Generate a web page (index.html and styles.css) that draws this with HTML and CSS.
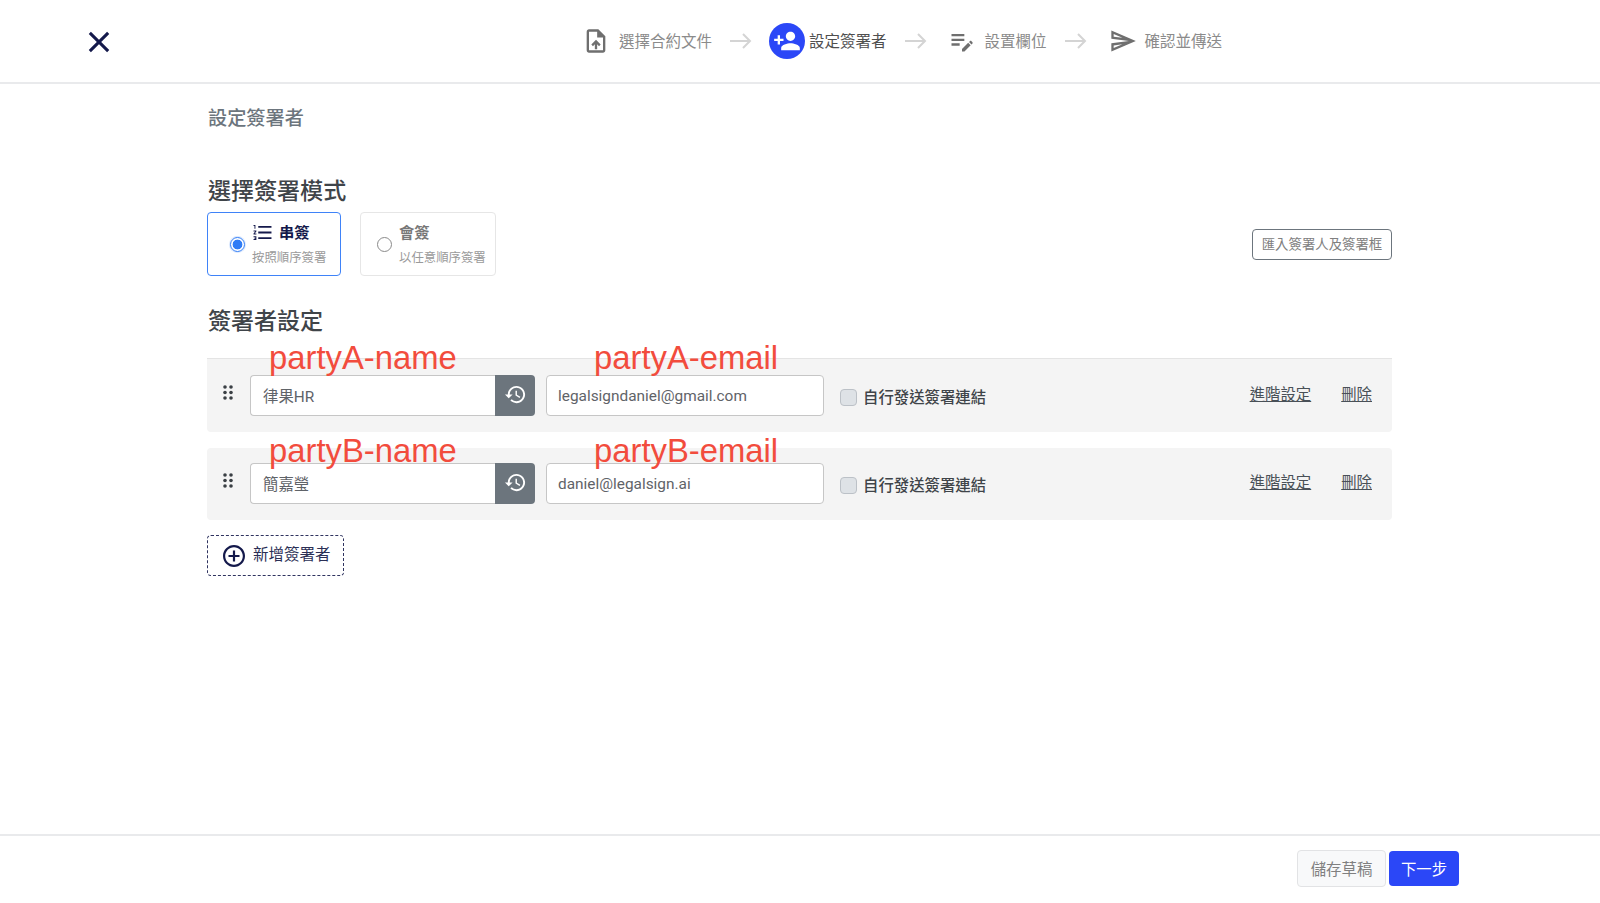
FILE: index.html
```html
<!DOCTYPE html>
<html lang="zh-Hant">
<head>
<meta charset="utf-8">
<title>設定簽署者</title>
<link rel="stylesheet" href="styles.css">
</head>
<body>
<header class="topbar">
  <button class="close" aria-label="close">
    <svg viewBox="0 0 24 24" class="close-icon"><path d="M2 2 22 22M22 2 2 22"/></svg>
  </button>
  <nav class="steps">
    <div class="step step-file">
      <svg class="step-icon" viewBox="0 0 24 24"><path d="M14 2H6c-1.1 0-1.99.9-1.99 2L4 20c0 1.1.89 2 1.99 2H18c1.1 0 2-.9 2-2V8l-6-6zm4 18H6V4h7v5h5v11zM8 15.01l1.41 1.41L11 14.84V19h2v-4.16l1.59 1.59L16 15.01 12.01 11 8 15.01z"/></svg>
      <span class="step-label">選擇合約文件</span>
    </div>
    <svg class="arrow" viewBox="0 0 22 16"><path d="M0 8H20M13 1l7 7-7 7"/></svg>
    <div class="step step-active">
      <span class="step-badge">
        <svg viewBox="0 0 24 24"><path d="M15 12c2.21 0 4-1.79 4-4s-1.79-4-4-4-4 1.79-4 4 1.79 4 4 4zm-9-2V7H4v3H1v2h3v3h2v-3h3v-2H6zm9 4c-2.67 0-8 1.34-8 4v2h16v-2c0-2.66-5.33-4-8-4z"/></svg>
      </span>
      <span class="step-label">設定簽署者</span>
    </div>
    <svg class="arrow" viewBox="0 0 22 16"><path d="M0 8H20M13 1l7 7-7 7"/></svg>
    <div class="step step-edit">
      <svg class="step-icon" viewBox="0 0 24 24"><path d="M3 10h11v2H3v-2zm0-2h11V6H3v2zm0 8h7v-2H3v2zm15.01-3.13.71-.71c.39-.39 1.02-.39 1.41 0l.71.71c.39.39.39 1.02 0 1.41l-.71.71-2.12-2.12zm-.71.71-5.3 5.3V21h2.12l5.3-5.3-2.12-2.12z"/></svg>
      <span class="step-label">設置欄位</span>
    </div>
    <svg class="arrow" viewBox="0 0 22 16"><path d="M0 8H20M13 1l7 7-7 7"/></svg>
    <div class="step step-send">
      <svg class="step-icon" viewBox="0 0 24 24"><path d="M4.01 6.03l7.51 3.22-7.52-1 .01-2.22m7.5 8.72L4 17.97v-2.22l7.51-1M2.01 3L2 10l15 2-15 2 .01 7L23 12 2.01 3z"/></svg>
      <span class="step-label">確認並傳送</span>
    </div>
  </nav>
</header>

<main class="content">
  <h1 class="page-title">設定簽署者</h1>
  <h2 class="section-title mode-title">選擇簽署模式</h2>
  <div class="mode-bar">
    <div class="mode-cards">
      <label class="mode-card mode-card-on">
        <input class="radio" type="radio" name="mode" checked>
        <span class="mode-text">
          <span class="mode-name">
            <svg class="list-icon" viewBox="2 3 19 18"><path d="M2 17h2v.5H3v1h1v.5H2v1h3v-4H2v1zm1-9h1V4H2v1h1v3zm-1 3h1.8L2 13.1v.9h3v-1H3.2L5 10.9V10H2v1zm5-6v2h14V5H7zm0 14h14v-2H7v2zm0-6h14v-2H7v2z"/></svg>
            串簽
          </span>
          <span class="mode-desc">按照順序簽署</span>
        </span>
      </label>
      <label class="mode-card">
        <input class="radio" type="radio" name="mode">
        <span class="mode-text">
          <span class="mode-name mode-name-off">會簽</span>
          <span class="mode-desc">以任意順序簽署</span>
        </span>
      </label>
    </div>
    <button class="import-btn">匯入簽署人及簽署框</button>
  </div>

  <h2 class="section-title signer-title">簽署者設定</h2>

  <div class="signers">
    <div class="signer signer-first">
      <span class="overlay overlay-name overlay-a">partyA-name</span>
      <span class="overlay overlay-email overlay-a">partyA-email</span>
      <svg class="drag" viewBox="0 0 10 15"><circle cx="2" cy="2" r="1.8"/><circle cx="8" cy="2" r="1.8"/><circle cx="2" cy="7.5" r="1.8"/><circle cx="8" cy="7.5" r="1.8"/><circle cx="2" cy="13" r="1.8"/><circle cx="8" cy="13" r="1.8"/></svg>
      <div class="name-group">
        <input class="field name-field" value="律果HR">
        <button class="history" aria-label="history"><svg viewBox="0 0 24 24"><path d="M13 3c-4.97 0-9 4.03-9 9H1l3.89 3.89.07.14L9 12H6c0-3.87 3.13-7 7-7s7 3.13 7 7-3.13 7-7 7c-1.93 0-3.68-.79-4.94-2.06l-1.42 1.42C8.27 19.99 10.51 21 13 21c4.97 0 9-4.03 9-9s-4.03-9-9-9zm-1 5v5l4.28 2.54.72-1.21-3.5-2.08V8H12z"/></svg></button>
      </div>
      <input class="field email-field" value="legalsigndaniel@gmail.com">
      <label class="self-send"><input class="check" type="checkbox"><span class="self-send-text">自行發送簽署連結</span></label>
      <div class="links"><a class="link" href="#">進階設定</a><a class="link" href="#">刪除</a></div>
    </div>
    <div class="signer">
      <span class="overlay overlay-name overlay-b">partyB-name</span>
      <span class="overlay overlay-email overlay-b">partyB-email</span>
      <svg class="drag" viewBox="0 0 10 15"><circle cx="2" cy="2" r="1.8"/><circle cx="8" cy="2" r="1.8"/><circle cx="2" cy="7.5" r="1.8"/><circle cx="8" cy="7.5" r="1.8"/><circle cx="2" cy="13" r="1.8"/><circle cx="8" cy="13" r="1.8"/></svg>
      <div class="name-group">
        <input class="field name-field" value="簡嘉瑩">
        <button class="history" aria-label="history"><svg viewBox="0 0 24 24"><path d="M13 3c-4.97 0-9 4.03-9 9H1l3.89 3.89.07.14L9 12H6c0-3.87 3.13-7 7-7s7 3.13 7 7-3.13 7-7 7c-1.93 0-3.68-.79-4.94-2.06l-1.42 1.42C8.27 19.99 10.51 21 13 21c4.97 0 9-4.03 9-9s-4.03-9-9-9zm-1 5v5l4.28 2.54.72-1.21-3.5-2.08V8H12z"/></svg></button>
      </div>
      <input class="field email-field" value="daniel@legalsign.ai">
      <label class="self-send"><input class="check" type="checkbox"><span class="self-send-text">自行發送簽署連結</span></label>
      <div class="links"><a class="link" href="#">進階設定</a><a class="link" href="#">刪除</a></div>
    </div>
  </div>

  <button class="add-signer">
    <svg viewBox="2 2 20 20"><path d="M13 7h-2v4H7v2h4v4h2v-4h4v-2h-4V7zm-1-5C6.49 2 2 6.49 2 12s4.49 10 10 10 10-4.49 10-10S17.51 2 12 2zm0 18c-4.41 0-8-3.59-8-8s3.59-8 8-8 8 3.59 8 8-3.59 8-8 8z"/></svg>
    <span>新增簽署者</span>
  </button>
</main>

<footer class="bottombar">
  <button class="btn-draft">儲存草稿</button>
  <button class="btn-next">下一步</button>
</footer>
</body>
</html>
```

FILE: styles.css
```css
* { box-sizing: border-box; }

html, body { height: 100%; }

body {
  margin: 0;
  height: 903px;
  display: flex;
  flex-direction: column;
  overflow: hidden;
  background: #fff;
  font-family: Roboto, "Noto Sans CJK TC", sans-serif;
  color: #495057;
}

button { font-family: inherit; cursor: pointer; }

/* top bar */
.topbar {
  height: 84px;
  flex: none;
  display: flex;
  align-items: center;
  padding: 0 0 0 88px;
  border-bottom: 2px solid #e9eaec;
}

.close {
  width: 22px;
  height: 22px;
  margin-top: 2px;
  padding: 0;
  border: 0;
  background: none;
  display: flex;
}

.close-icon {
  width: 22px;
  height: 22px;
  fill: none;
  stroke: #14194b;
  stroke-width: 3.3;
}

.steps {
  display: flex;
  align-items: center;
  margin-left: 472px;
}

.step {
  display: flex;
  align-items: center;
  gap: 8px;
  font-size: 15.5px;
  color: #8b8b8b;
}

.step-label { padding-bottom: 2px; }

.step-icon {
  width: 28px;
  height: 28px;
  fill: #6f6f6f;
}

.step-file { gap: 9px; }
.step-active { gap: 4px; margin-left: -1px; color: #4f4f4f; }
.step-edit { gap: 9px; margin-left: 3px; }
.step-send { gap: 8px; margin-left: 4px; }

.step-badge {
  width: 36px;
  height: 36px;
  border-radius: 50%;
  background: #2b47f7;
  display: flex;
  align-items: center;
  justify-content: center;
}

.step-badge svg { width: 28px; height: 28px; fill: #fff; }

.arrow {
  width: 22px;
  height: 16px;
  margin: 0 18px;
  fill: none;
  stroke: #d4d4d4;
  stroke-width: 2;
}

/* content */
.content {
  flex: 1;
  padding: 20px 208px 0 207px;
}

.page-title {
  margin: 0 0 0 1px;
  font-size: 19.2px;
  line-height: 29px;
  font-weight: 500;
  color: #6c757d;
}

.section-title {
  margin: 0 0 0 1px;
  font-size: 23.04px;
  line-height: 34px;
  font-weight: 500;
  color: #3f4449;
}

.mode-title { margin-top: 41.5px; }
.signer-title { margin-top: 29px; }

.mode-bar {
  margin-top: 3.5px;
  display: flex;
  align-items: center;
  justify-content: space-between;
}

.mode-cards { display: flex; gap: 19px; }

.mode-card {
  width: 134px;
  height: 64px;
  display: flex;
  align-items: center;
  gap: 7px;
  padding-left: 22px;
  border: 1.5px solid #e6e6e6;
  border-radius: 4px;
  background: #fff;
}

.mode-card + .mode-card { width: 136px; padding-left: 16px; }

.mode-card-on { border-color: #3f83f8; }

.radio {
  appearance: none;
  flex: none;
  width: 15px;
  height: 15px;
  margin: 0;
  border: 1.5px solid #8a8a8a;
  border-radius: 50%;
  background: #fff;
}

.radio:checked {
  border-color: #2f7cf6;
  background: radial-gradient(circle, #2f7cf6 0 4.6px, #fff 5.2px);
  box-shadow: 0 0 0 1px rgba(47, 124, 246, .18);
}

.mode-text {
  display: flex;
  flex-direction: column;
  gap: 6px;
  margin-top: 1px;
}

.mode-name {
  display: flex;
  align-items: center;
  gap: 7px;
  font-size: 15.3px;
  line-height: 20px;
  font-weight: 700;
  color: #14194b;
  padding-left: 1px;
}

.mode-name-off { color: #777; padding-left: 0; }

.list-icon { width: 19px; height: 17px; fill: #14194b; }

.mode-desc {
  font-size: 12.4px;
  line-height: 18px;
  color: #9a9a9a;
  white-space: nowrap;
}

.import-btn {
  width: 140px;
  height: 31px;
  padding: 0 0 2px;
  border: 1px solid #6c757d;
  border-radius: 4px;
  background: #fff;
  font-size: 13.4px;
  color: #808080;
}

/* signers */
.signers {
  margin-top: 19px;
  display: flex;
  flex-direction: column;
  gap: 16px;
}

.signer {
  position: relative;
  height: 72px;
  display: flex;
  align-items: center;
  padding: 0 20px 0 16px;
  background: #f4f4f4;
  border-radius: 4px;
}

.signer-first {
  height: 74px;
  padding-top: 1px;
  border-top: 1px solid #e4e4e4;
  border-radius: 0 0 4px 4px;
}

.overlay {
  position: absolute;
  font-family: "Liberation Sans", Arial, sans-serif;
  font-size: 32.8px;
  line-height: 38px;
  color: #f24c3d;
  white-space: nowrap;
}

.overlay-name { left: 62px; }
.overlay-email { left: 387px; }
.overlay-a { top: -20px; }
.overlay-b { top: -16px; }

.drag {
  width: 10px;
  height: 15px;
  flex: none;
  fill: #3a3f44;
  margin-bottom: 7px;
}

.name-group {
  display: flex;
  width: 285px;
  height: 41px;
  margin: 0 0 2px 17px;
}

.field {
  height: 41px;
  padding: 0 12px;
  background: #fff;
  border: 1px solid #c6c6c6;
  border-radius: 4px;
  font-family: inherit;
  font-size: 15.4px;
  color: #5f6368;
  outline: none;
}

.name-field {
  flex: 1;
  min-width: 0;
  border-right: 0;
  border-radius: 4px 0 0 4px;
}

.history {
  width: 40px;
  flex: none;
  padding: 0 0 2px;
  border: 0;
  border-radius: 0 4px 4px 0;
  background: #6c757d;
  display: flex;
  align-items: center;
  justify-content: center;
}

.history svg { width: 23px; height: 23px; fill: #fff; }

.email-field {
  width: 278px;
  margin: 0 0 2px 11px;
  padding: 2px 11px 0;
}

.self-send {
  display: flex;
  align-items: center;
  gap: 6px;
  margin: 3px 0 0 16px;
  font-size: 15.4px;
  font-weight: 500;
  color: #3f4449;
}

.self-send-text { padding-bottom: 4px; }

.check {
  appearance: none;
  width: 17px;
  height: 17px;
  margin: 0;
  border: 1px solid #bcc1c7;
  border-radius: 4px;
  background: #dee2e6;
}

.links {
  margin-left: auto;
  margin-bottom: 6px;
  display: flex;
  gap: 30px;
}

.link {
  font-size: 15.4px;
  color: #495057;
  text-decoration: underline;
}

.add-signer {
  margin-top: 15px;
  width: 137px;
  height: 41px;
  padding: 0 0 0 15px;
  display: flex;
  align-items: center;
  gap: 8px;
  border: 1.5px dashed #2f3360;
  border-radius: 4px;
  background: #fff;
  font-size: 15.5px;
  color: #2b2f55;
}

.add-signer span { margin-top: -5px; }

.add-signer svg { width: 22px; height: 22px; fill: #14194b; }

/* bottom bar */
.bottombar {
  height: 69px;
  flex: none;
  display: flex;
  align-items: center;
  justify-content: flex-end;
  gap: 3px;
  padding: 0 141px 2px 0;
  border-top: 2px solid #e9eaec;
}

.btn-draft {
  width: 89px;
  height: 37px;
  padding: 0 0 2px;
  border: 1px solid #e2e3e5;
  border-radius: 4px;
  background: #f8f9fa;
  font-size: 15.4px;
  color: #808080;
}

.btn-next {
  width: 70px;
  height: 35px;
  padding: 0 0 2px;
  border: 0;
  border-radius: 4px;
  background: #2b47f7;
  font-size: 15.4px;
  color: #fff;
}
```
